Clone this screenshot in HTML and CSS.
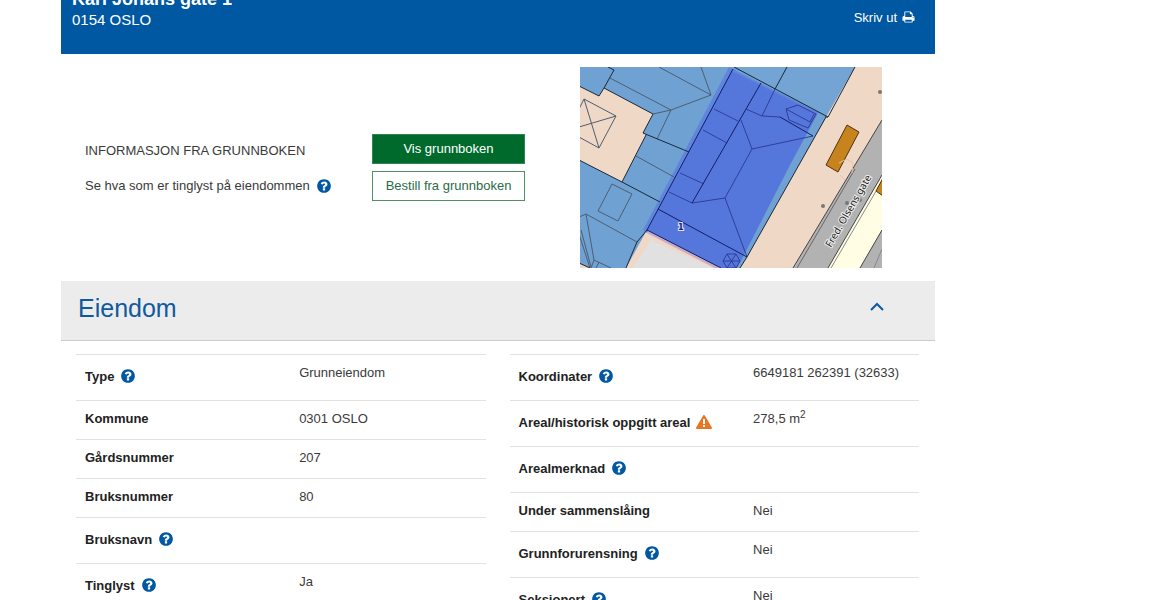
FILE: index.html
```html
<!DOCTYPE html>
<html lang="no">
<head>
<meta charset="utf-8">
<title>Eiendom</title>
<link rel="stylesheet" href="styles.css">
</head>
<body>
<svg class="sprite" aria-hidden="true">
  <symbol id="help" viewBox="0 0 1792 1792"><path d="M1024 1376v-192q0-14-9-23t-23-9h-192q-14 0-23 9t-9 23v192q0 14 9 23t23 9h192q14 0 23-9t9-23zm256-672q0-88-55.5-163t-138.5-116-170-41q-243 0-371 213-15 24 8 42l132 100q7 6 19 6 16 0 25-12 53-68 86-92 34-24 86-24 48 0 85.5 26t37.500 59q0 38-20 61t-68 45q-63 28-115.500 86.500t-52.500 125.500v36q0 14 9 23t23 9h192q14 0 23-9t9-23q0-19 21.500-49.500t54.500-49.500q32-18 49-28.500t46-35 44.500-48 28-60.500 12.500-81zm384 192q0 209-103 385.500t-279.500 279.500-385.500 103-385.500-103-279.500-279.500-103-385.500 103-385.500 279.500-279.500 385.500-103 385.500 103 279.500 279.500 103 385.500z"/></symbol>
</svg>
<main class="page">
  <header class="banner">
    <div class="address">
      <h1 class="street">Karl Johans gate 1</h1>
      <p class="city">0154 OSLO</p>
    </div>
    <a class="print" href="#">Skriv ut
      <svg class="print-icon" viewBox="0 0 1792 1792" aria-hidden="true"><path d="M448 1536h896v-256h-896v256zm0-640h896v-384h-160q-40 0-68-28t-28-68v-160h-640v640zm1152 64q0-26-19-45t-45-19-45 19-19 45 19 45 45 19 45-19 19-45zm128 0v416q0 13-9.500 22.500t-22.500 9.500h-224v160q0 40-28 68t-68 28h-960q-40 0-68-28t-28-68v-160h-224q-13 0-22.500-9.500t-9.500-22.500v-416q0-79 56.500-135.500t135.500-56.500h64v-544q0-40 28-68t68-28h672q40 0 88 20t76 48l152 152q28 28 48 76t20 88v256h64q79 0 135.500 56.500t56.500 135.500z"/></svg>
    </a>
  </header>

  <section class="info">
    <div class="info-text">
      <p>INFORMASJON FRA GRUNNBOKEN</p>
      <p class="with-icon">Se hva som er tinglyst på eiendommen <button class="help" type="button" aria-label="Hjelp"><svg><use href="#help"/></svg></button></p>
    </div>
    <div class="actions">
      <button class="btn btn-primary" type="button">Vis grunnboken</button>
      <button class="btn btn-outline" type="button">Bestill fra grunnboken</button>
    </div>
    <svg class="map" viewBox="1 0 302 201" role="img" aria-label="Kart">
      <rect width="303" height="201" fill="#6fa1d2"/>
      <path fill="#73a4d3" d="M155 0L249 50L276 0Z"/>
      <!-- open ground -->
      <g fill="#efd8c5">
        <path d="M0 19L20 29L25 21L74 47L64 66L67 68L43 115L0 93Z"/>
        <path d="M276 0H303V201H161L168 190L247 50Z"/>
        <path d="M68 163L47 201H145Z"/>
        <path d="M0 196L11 201H0Z"/>
      </g>
      <path fill="#e2e1e2" d="M72 173L54 201H133Z"/>
      <path stroke="#c8aacb" stroke-width="3" d="M69 165L139 201"/>
      <!-- roads -->
      <path fill="#b2b2b2" d="M303 53L276 98L214 201H303Z"/>
      <path fill="#fffee5" d="M303 108L249 201H281L303 163Z"/>
      <g fill="none" stroke="#444" stroke-width="1">
        <path d="M303 53L276 98L214 201"/>
        <path d="M276 102L218 201" stroke="#666"/>
        <path d="M303 108L249 201M303 163L281 201"/>
        <path d="M303 114L252 201M303 182L295 201" stroke="#888"/>
      </g>
      <g fill="#c7831e" stroke="#4b350e">
        <path d="M268 58L280 65L259 105L247 98Z"/>
        <path d="M304 111L297 124L304 129Z"/>
      </g>
      <path fill="none" stroke="#e6c3a9" d="M260 96l8-4l6 4l-1 10M261 108l5 5"/>
      <!-- selected property -->
      <path fill="#5f86dc" d="M150 0L64 163L68 166L104 103L157 3Z"/>
      <path fill="#5577dc" d="M153 3L155 4L239 46L211 98L165 188L158 201H142L68 163Z"/>
      <path fill="none" stroke="#5f86dc" stroke-width="2" d="M153 3L239 46"/>
      <!-- neighbouring roofs -->
      <g fill="none" stroke="#4d5f72">
        <path d="M5 32L37 49L20 81L0 70M0 42L5 32L20 81M0 60L37 49"/>
        <path d="M31 11L92 43M74 47L92 43L132 28L122 0M80 0L132 28M92 43L78 72"/>
        <path d="M57 89L95 110M33 117L53 127L39 154L19 144Z"/>
        <path d="M0 150L7 147L58 175M7 147L15 193L12 201M2 163L12 200M0 167L11 201M15 193L32 201M20 195L17 201"/>
      </g>
      <g fill="none" stroke="#1b2838" stroke-width="1">
        <path d="M29 0L35 3L25 21L20 29L0 19M25 21L74 47L64 66L110 85M67 68L43 115M0 93L43 115L81 135"/>
        <path d="M155 0L249 50L276 0M208 0L196 22M247 50L168 190L161 201M68 163L58 175L47 201M0 196L11 201M249 50H246"/>
      </g>
      <g fill="none" stroke="#303f98">
        <path d="M135 42L159 54M124 63L148 76M101 106L125 117M90 125L113 136L146 131L173 82"/>
        <path d="M196 22L183 49M167 42L183 49L201 50M162 53L173 82L234 69M207 42L219 38L237 47L229 61L210 53ZM207 42L231 55L235 47"/>
        <path d="M146 131L168 190M148 187L157 187L161 194L157 201H148L144 194ZM148 187L157 201M157 187L148 201M144 194H161"/>
      </g>
      <g fill="none" stroke="#111e66">
        <path d="M154 2L68 163L142 201M182 16L132 103L113 136M79 142L168 190M201 50L234 69"/>
      </g>
      <g fill="#777"><circle cx="301" cy="25" r="2"/><circle cx="244" cy="139" r="2"/><circle cx="268" cy="136" r="2"/><circle cx="281" cy="133" r="2"/></g>
      <text class="map-number" x="99" y="163">1</text>
      <text class="map-street" transform="translate(252 181) rotate(-60)">Fred. Olsens gate</text>
    </svg>
  </section>

  <section>
    <div class="section-head">
      <h2>Eiendom</h2>
      <button class="toggle" type="button" aria-label="Skjul Eiendom"><svg viewBox="0 0 16 10"><path d="M2 8L8 2L14 8"/></svg></button>
    </div>
    <div class="columns">
      <table class="facts facts-left">
        <tr><th scope="row"><div class="with-icon">Type <button class="help" type="button" aria-label="Hjelp"><svg><use href="#help"/></svg></button></div></th><td>Grunneiendom</td></tr>
        <tr><th scope="row">Kommune</th><td>0301 OSLO</td></tr>
        <tr><th scope="row">Gårdsnummer</th><td>207</td></tr>
        <tr><th scope="row">Bruksnummer</th><td>80</td></tr>
        <tr><th scope="row"><div class="with-icon">Bruksnavn <button class="help" type="button" aria-label="Hjelp"><svg><use href="#help"/></svg></button></div></th><td></td></tr>
        <tr><th scope="row"><div class="with-icon">Tinglyst <button class="help" type="button" aria-label="Hjelp"><svg><use href="#help"/></svg></button></div></th><td>Ja</td></tr>
      </table>
      <table class="facts facts-right">
        <tr><th scope="row"><div class="with-icon">Koordinater <button class="help" type="button" aria-label="Hjelp"><svg><use href="#help"/></svg></button></div></th><td>6649181 262391 (32633)</td></tr>
        <tr><th scope="row"><div class="with-icon">Areal/historisk oppgitt areal <button class="help warning" type="button" aria-label="Advarsel"><svg viewBox="0 0 16 16"><path class="triangle" d="M8 2L15 14H1Z"/><path class="mark" d="M8 5V10M8 11V13"/></svg></button></div></th><td>278,5 m<sup>2</sup></td></tr>
        <tr><th scope="row"><div class="with-icon">Arealmerknad <button class="help" type="button" aria-label="Hjelp"><svg><use href="#help"/></svg></button></div></th><td></td></tr>
        <tr><th scope="row">Under sammenslåing</th><td>Nei</td></tr>
        <tr><th scope="row"><div class="with-icon">Grunnforurensning <button class="help" type="button" aria-label="Hjelp"><svg><use href="#help"/></svg></button></div></th><td>Nei</td></tr>
        <tr><th scope="row"><div class="with-icon">Seksjonert <button class="help" type="button" aria-label="Hjelp"><svg><use href="#help"/></svg></button></div></th><td>Nei</td></tr>
      </table>
    </div>
  </section>
</main>
</body>
</html>
```
FILE: styles.css
```css
* { box-sizing: border-box; }
body {
  margin: 0;
  height: 100vh;
  overflow: hidden;
  background: #fff;
  color: #3a3a3a;
  font: 13px/15px "Liberation Sans", Arial, sans-serif;
}
h1, h2, p { margin: 0; }
button { font: inherit; cursor: pointer; }
.sprite { display: none; }
.page { max-width: 874px; margin-left: 61px; }

/* Banner, scrolled partly out of view */
.banner {
  display: flex;
  justify-content: space-between;
  align-items: flex-end;
  margin-top: -26px;
  padding: 14px 20px 24px 11px;
  background: #0057a2;
  color: #fff;
}
.street { font-size: 18px; line-height: 22px; }
.city { font-size: 15px; line-height: 20px; }
.print {
  display: flex;
  align-items: center;
  gap: 5px;
  padding-bottom: 5px;
  color: #fff;
  text-decoration: none;
}
.print-icon { width: 13px; height: 16px; fill: #fff; }

/* Land register actions */
.info {
  display: grid;
  grid-template-columns: 287px 153px 1fr;
  align-items: center;
  padding: 13px 53px 13px 24px;
}
.info-text { display: grid; gap: 15px; padding-top: 2px; line-height: 20px; }
.with-icon { display: flex; align-items: center; gap: 6px; }
.help { display: flex; padding: 0; border: 0; background: none; }
.help svg { width: 16px; height: 16px; fill: #0057a2; }
.actions { display: grid; gap: 7px; }
.btn {
  height: 30px;
  padding: 0 0 2px;
  border: 1px solid #4f9069;
  background: #fff;
  color: #2c6b48;
}
.btn-primary { background: #006a2c; border-color: #2f8654; color: #fff; }
.map { width: 302px; height: 201px; justify-self: end; display: block; }
.map-number { font: bold 8px "DejaVu Sans", sans-serif; fill: #201a70; stroke: #dfe4fa; stroke-width: 2px; paint-order: stroke; }
.map-street { font: 10px "Noto Sans", sans-serif; fill: #222; stroke: #eee; stroke-width: 2px; paint-order: stroke; }

/* Collapsible section */
.section-head {
  display: flex;
  justify-content: space-between;
  padding: 12px 50px 17px 17px;
  background: #ececec;
  border-bottom: 1px solid #ccc;
}
.section-head h2 { color: #0f5a9f; font-size: 25px; font-weight: 400; line-height: 30px; }
.toggle { display: flex; align-items: center; padding: 0 0 2px; border: 0; background: none; }
.toggle svg { width: 16px; height: 10px; fill: none; stroke: #0f5a9f; stroke-width: 2px; }

.columns {
  display: grid;
  grid-template-columns: 1fr 1fr;
  align-items: start;
  gap: 24px;
  padding: 13px 16px 0 15px;
}
.facts { width: 100%; border-spacing: 0; table-layout: fixed; }
.facts th, .facts td {
  padding: 10px 0 13px;
  border-top: 1px solid #e2e2e2;
  text-align: left;
  vertical-align: top;
}
.facts th { padding-left: 9px; color: #222; }
.facts td { padding-left: 2px; }
.facts-left th { width: 54%; }
.facts-right th { width: 59%; }
.facts .with-icon { height: 22px; }
.facts sup { font-size: 10px; line-height: 0; }
.warning .triangle { fill: #e87722; stroke: #e87722; stroke-width: 2px; stroke-linejoin: round; }
.warning .mark { stroke: #fff; stroke-width: 2px; }
```
